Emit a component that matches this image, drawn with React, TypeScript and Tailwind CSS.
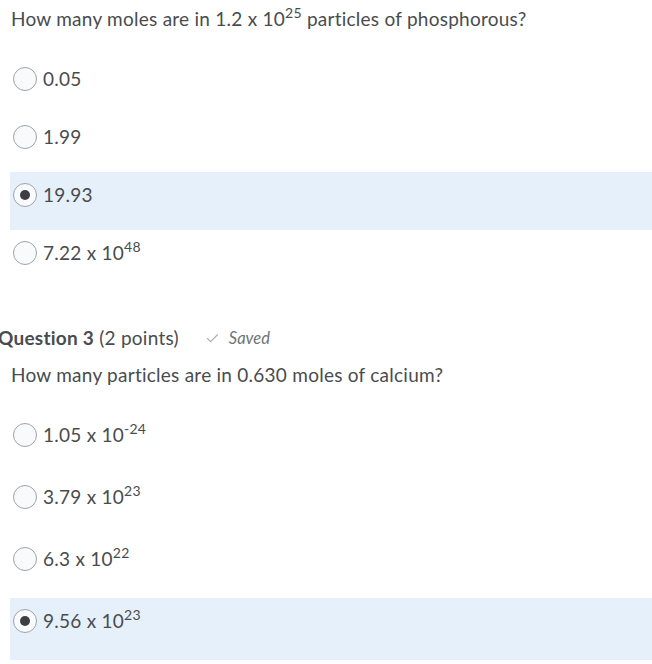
import { Check } from 'lucide-react'
import type { ReactNode } from 'react'

interface Choice {
  label: ReactNode
  selected?: boolean
}

function Sup({ children }: { children: ReactNode }) {
  return <sup className="relative -top-[8px] align-baseline text-[14px] leading-none">{children}</sup>
}

function Pow({ base, exp }: { base: string; exp: string }) {
  return (
    <>
      {base} x 10<Sup>{exp}</Sup>
    </>
  )
}

function Radio({ selected }: { selected?: boolean }) {
  return (
    <span className="flex h-[24px] w-[24px] shrink-0 items-center justify-center rounded-full border border-[#9ea3a7] bg-[#f9fafb]">
      {selected && <span className="h-[10px] w-[10px] rounded-full bg-[#3c3f41]" />}
    </span>
  )
}

function Option({ choice, rowH }: { choice: Choice; rowH: string }) {
  return (
    <div className={`${rowH} ${choice.selected ? 'bg-[#e5f0fb]' : ''} flex items-start pl-[3px]`}>
      <div className="mt-[11px] flex items-center gap-[6px]">
        <Radio selected={choice.selected} />
        <span className="text-[19px] leading-[24px] tracking-[0.25px]">{choice.label}</span>
      </div>
    </div>
  )
}

const q2Choices: Choice[] = [
  { label: '0.05' },
  { label: '1.99' },
  { label: '19.93', selected: true },
  { label: <Pow base="7.22" exp="48" /> },
]

const q3Choices: Choice[] = [
  { label: <Pow base="1.05" exp="-24" /> },
  { label: <Pow base="3.79" exp="23" /> },
  { label: <Pow base="6.3" exp="22" /> },
  { label: <Pow base="9.56" exp="23" />, selected: true },
]

export default function App() {
  return (
    <div className="h-[664px] w-[652px] overflow-hidden bg-white font-['Lato','Noto_Sans',sans-serif] text-[#494c4e]">
      <div className="pl-[10px]">
        <p className="pl-[1px] pt-[5px] text-[19px] leading-[28px] tracking-[0.25px]">
          How many moles are in 1.2 x 10<Sup>25</Sup> particles of phosphorous?
        </p>
        <div className="mt-[23px]">
          {q2Choices.map((c, i) => (
            <Option key={i} choice={c} rowH="h-[58px]" />
          ))}
        </div>
      </div>

      <div className="mt-[36px] flex items-center">
        <h2 className="-ml-[2px] text-[19px] leading-[28px] tracking-[0.25px]">
          <span className="font-bold">Question 3</span> (2 points)
        </h2>
        <span className="ml-[26px] flex items-center gap-[9px] text-[16.5px] italic text-[#6e7376]">
          <Check size={15} strokeWidth={1.75} className="text-[#a9adb0]" />
          Saved
        </span>
      </div>

      <div className="pl-[10px]">
        <p className="pl-[1px] pt-[9px] text-[19px] leading-[28px] tracking-[0.25px]">
          How many particles are in 0.630 moles of calcium?
        </p>
        <div className="mt-[23px]">
          {q3Choices.map((c, i) => (
            <Option key={i} choice={c} rowH="h-[62px]" />
          ))}
        </div>
      </div>
    </div>
  )
}
